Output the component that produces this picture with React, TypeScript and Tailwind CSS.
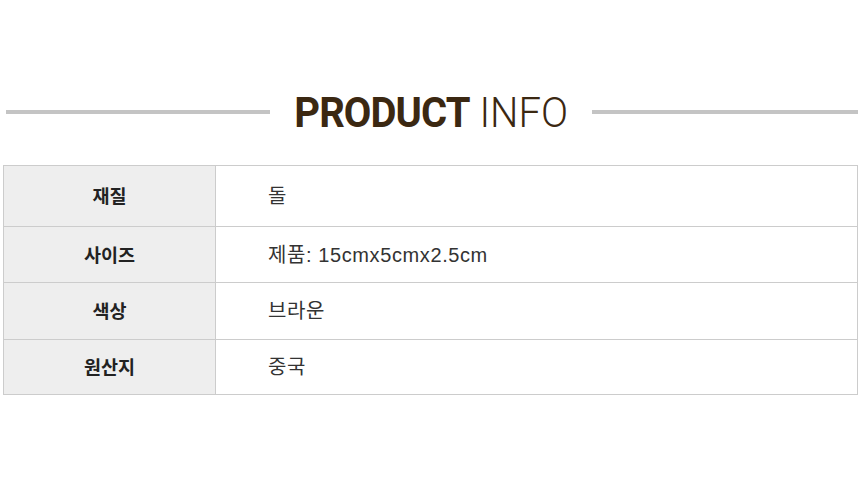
const rows = [
  { label: "재질", value: "돌", h: "h-[60px]" },
  { label: "사이즈", value: "제품: 15cmx5cmx2.5cm", h: "h-[56px]" },
  { label: "색상", value: "브라운", h: "h-[57px]" },
  { label: "원산지", value: "중국", h: "h-[55px]" },
];

const App = () => {
  return (
    <div className="w-[860px] h-[500px] bg-white font-['Liberation_Sans','Noto_Sans_CJK_KR',sans-serif]">
      <div className="flex items-center pt-[88px] pl-[6px] pr-[2px]">
        <div className="h-[4px] w-[264px] bg-[#c4c4c4]" />
        <div className="w-[322px] flex justify-center">
          <h1 className="text-[43px] leading-[48px] text-[#3b2812] font-['Roboto',sans-serif] scale-x-[0.93] whitespace-nowrap">
            <span className="font-bold tracking-[-1px]">PRODUCT</span> <span className="font-light">INFO</span>
          </h1>
        </div>
        <div className="h-[4px] flex-1 bg-[#c4c4c4]" />
      </div>

      <div className="mt-[29px] mx-[3px] w-[855px] border border-[#cccccc]">
        {rows.map((row, i) => (
          <div
            key={row.label}
            className={`flex ${row.h} ${i > 0 ? "border-t border-[#cccccc]" : ""}`}
          >
            <div className="w-[212px] bg-[#eeeeee] border-r border-[#cccccc] flex items-center justify-center text-[18.5px] font-bold text-[#222222] font-['Noto_Sans_CJK_KR',sans-serif]">
              {row.label}
            </div>
            <div className="flex-1 flex items-center pl-[52px] text-[20px] tracking-[0.6px] text-[#333333]">
              {row.value}
            </div>
          </div>
        ))}
      </div>
    </div>
  );
};

export default App;
